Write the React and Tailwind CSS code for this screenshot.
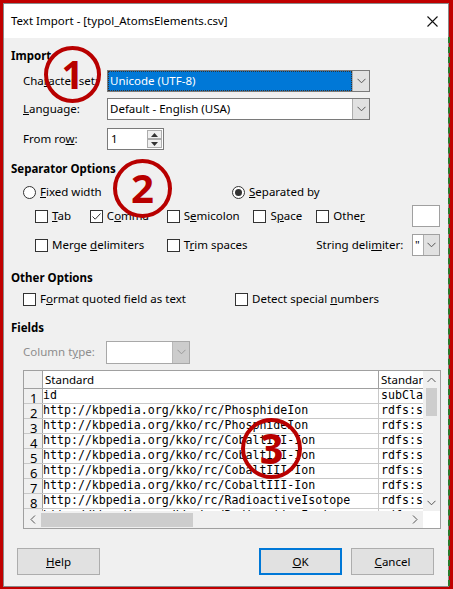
import React from "react";

const ui = { fontFamily: '"Noto Sans", "Liberation Sans", sans-serif' };
const mono = { fontFamily: '"DejaVu Sans Mono", "Liberation Mono", monospace' };

function ChevronDown({ color = "#555" }) {
  return (
    <svg width="9" height="6" viewBox="0 0 9 6">
      <path d="M0.5 0.8 L4.5 4.8 L8.5 0.8" fill="none" stroke={color} strokeWidth="1" />
    </svg>
  );
}

function Checkbox({ checked }) {
  return (
    <span className="inline-flex w-[13px] h-[13px] border border-[#333] bg-white items-center justify-center shrink-0">
      {checked && (
        <svg width="11" height="11" viewBox="0 0 11 11">
          <path d="M1.5 5.5 L4.2 8.2 L9.5 2.5" fill="none" stroke="#333" strokeWidth="1" />
        </svg>
      )}
    </span>
  );
}

function Radio({ checked }) {
  return (
    <span className="inline-flex w-[13px] h-[13px] rounded-full border border-[#333] bg-white items-center justify-center shrink-0">
      {checked && <span className="w-[7px] h-[7px] rounded-full bg-[#333]" />}
    </span>
  );
}

function Check({ checked, children, w }) {
  return (
    <div className="flex items-center gap-[4px]" style={w ? { width: w } : undefined}>
      <Checkbox checked={checked} />
      <span>{children}</span>
    </div>
  );
}

function Circle({ n, left, top, size }) {
  return (
    <div
      className="absolute rounded-full border-[4px] border-[#b80000] flex items-center justify-center"
      style={{ left, top, width: size, height: size }}
    >
      <span
        className="font-bold text-[#b80000] leading-none"
        style={{ ...ui, fontSize: size * 0.68 }}
      >
        {n}
      </span>
    </div>
  );
}

const rows = [
  ["id", "subCla:"],
  ["http://kbpedia.org/kko/rc/PhosphideIon", "rdfs:su"],
  ["http://kbpedia.org/kko/rc/PhosphideIon", "rdfs:su"],
  ["http://kbpedia.org/kko/rc/CobaltIII-Ion", "rdfs:su"],
  ["http://kbpedia.org/kko/rc/CobaltIII-Ion", "rdfs:su"],
  ["http://kbpedia.org/kko/rc/CobaltIII-Ion", "rdfs:su"],
  ["http://kbpedia.org/kko/rc/CobaltIII-Ion", "rdfs:su"],
  ["http://kbpedia.org/kko/rc/RadioactiveIsotope", "rdfs:su"],
  ["http://kbpedia.org/kko/rc/RadioactiveIsotope", "rdfs:su"],
];

export default function App() {
  return (
    <div className="relative w-[453px] h-[589px] bg-[#c00000] overflow-hidden" style={ui}>
      <div className="absolute left-[3px] top-[3px] w-[446px] h-[584px] border border-[#8a8a8a] bg-[#f0f0f0] flex flex-col text-[11.5px] text-black">
        {/* Title bar */}
        <div className="h-[34px] bg-white flex items-center justify-between pl-[7px] pr-[10px] shrink-0">
          <span className="text-[11.5px]">Text Import - [typol_AtomsElements.csv]</span>
          <svg width="11" height="11" viewBox="0 0 11 11">
            <path d="M0.5 0.5 L10.5 10.5 M10.5 0.5 L0.5 10.5" stroke="#111" strokeWidth="1.1" />
          </svg>
        </div>

        {/* Body */}
        <div className="flex flex-col pl-[7px] pr-[8px]">
          <div className="h-[16px] mt-[10px] leading-[16px] font-bold">Import</div>

          <div className="h-[22px] mt-[6px] flex items-center pl-[12px]">
            <span className="w-[84px]">Cha<u>r</u>acter set:</span>
            <div className="w-[263px] h-[22px] border border-[#7a7a7a] flex bg-white">
              <div className="flex-1 bg-[#0078d7] text-white pl-[2px] flex items-center outline-dotted outline-1 outline-[#333] -outline-offset-1">
                Unicode (UTF-8)
              </div>
              <div className="w-[17px] bg-[#e1e1e1] border-l border-[#adadad] flex items-center justify-center">
                <ChevronDown />
              </div>
            </div>
          </div>

          <div className="h-[22px] mt-[6px] flex items-center pl-[12px]">
            <span className="w-[84px]"><u>L</u>anguage:</span>
            <div className="w-[263px] h-[22px] border border-[#7a7a7a] flex bg-white">
              <div className="flex-1 pl-[2px] flex items-center">Default - English (USA)</div>
              <div className="w-[17px] bg-[#e1e1e1] border-l border-[#adadad] flex items-center justify-center">
                <ChevronDown />
              </div>
            </div>
          </div>

          <div className="h-[22px] mt-[8px] flex items-center pl-[12px]">
            <span className="w-[84px]">From ro<u>w</u>:</span>
            <div className="w-[57px] h-[22px] border border-[#7a7a7a] flex bg-white">
              <div className="flex-1 pl-[3px] flex items-center">1</div>
              <div className="w-[16px] flex flex-col py-[1px] pr-[1px]">
                <div className="flex-1 bg-[#f0f0f0] border border-[#adadad] flex items-center justify-center">
                  <svg width="7" height="4" viewBox="0 0 7 4"><path d="M0 4 L3.5 0 L7 4Z" fill="#333" /></svg>
                </div>
                <div className="flex-1 bg-[#f0f0f0] border border-[#adadad] flex items-center justify-center">
                  <svg width="7" height="4" viewBox="0 0 7 4"><path d="M0 0 L3.5 4 L7 0Z" fill="#333" /></svg>
                </div>
              </div>
            </div>
          </div>

          <div className="h-[16px] mt-[11px] leading-[16px] font-bold">Separator Options</div>

          <div className="h-[16px] mt-[7px] flex items-center pl-[12px]">
            <div className="flex items-center gap-[4px] w-[209px]">
              <Radio />
              <span><u>F</u>ixed width</span>
            </div>
            <div className="flex items-center gap-[4px]">
              <Radio checked />
              <span><u>S</u>eparated by</span>
            </div>
          </div>

          <div className="h-[22px] mt-[5px] flex items-center pl-[24px]">
            <Check w="55px"><u>T</u>ab</Check>
            <Check w="77px" checked>C<u>o</u>mma</Check>
            <Check w="87px">S<u>e</u>micolon</Check>
            <Check w="63px">S<u>p</u>ace</Check>
            <Check w="96px">Othe<u>r</u></Check>
            <div className="w-[28px] h-[22px] border border-[#a0a0a0] bg-white" />
          </div>

          <div className="h-[22px] mt-[7px] flex items-center pl-[24px]">
            <Check w="132px">Merge <u>d</u>elimiters</Check>
            <Check w="150px">T<u>r</u>im spaces</Check>
            <span className="w-[96px]">String deli<u>m</u>iter:</span>
            <div className="w-[28px] h-[22px] border border-[#a0a0a0] bg-white flex">
              <div className="flex-1 pl-[2px] flex items-center">"</div>
              <div className="w-[16px] bg-[#e1e1e1] border-l border-[#adadad] flex items-center justify-center">
                <ChevronDown />
              </div>
            </div>
          </div>

          <div className="h-[16px] mt-[14px] leading-[16px] font-bold">Other Options</div>

          <div className="h-[16px] mt-[5px] flex items-center pl-[12px]">
            <Check w="212px">F<u>o</u>rmat quoted field as text</Check>
            <Check>Detect special <u>n</u>umbers</Check>
          </div>

          <div className="h-[16px] mt-[13px] leading-[16px] font-bold">Fields</div>

          <div className="h-[22px] mt-[5px] flex items-center pl-[12px]">
            <span className="w-[83px] text-[#8d8d8d]">Column t<u>y</u>pe:</span>
            <div className="w-[84px] h-[23px] border border-[#a8a8a8] bg-white flex">
              <div className="flex-1" />
              <div className="w-[17px] bg-[#cccccc] border-l border-[#b8b8b8] flex items-center justify-center">
                <ChevronDown color="#999" />
              </div>
            </div>
          </div>

          {/* Table */}
          <div className="ml-[12px] mt-[7px] w-[418px] h-[159px] border border-[#a0a0a0] bg-white flex flex-col">
            <div className="flex flex-1 min-h-0">
              <div className="flex-1 min-w-0 overflow-hidden flex flex-col">
                <div className="flex h-[18px] shrink-0 border-b border-[#a0a0a0]">
                  <div className="w-[19px] shrink-0 bg-[#f0f0f0] border-r border-[#a0a0a0]" />
                  <div className="w-[336px] shrink-0 border-r border-[#a0a0a0] pl-[2px] leading-[18px]">Standard</div>
                  <div className="flex-1 pl-[2px] leading-[18px] overflow-hidden whitespace-nowrap">Standard</div>
                </div>
                {rows.map((r, i) => (
                  <div key={i} className="flex h-[15px] shrink-0 border-b border-[#c8c8c8]">
                    <div className="w-[19px] shrink-0 bg-[#f0f0f0] border-r border-[#a0a0a0] text-[13px] leading-[16px] pl-[6px] pt-[1px]">
                      {i + 1}
                    </div>
                    <div
                      className="w-[336px] shrink-0 border-r border-[#c8c8c8] text-[11.6px] leading-[13px] whitespace-nowrap overflow-hidden"
                      style={mono}
                    >
                      {r[0]}
                    </div>
                    <div
                      className="flex-1 pl-[2px] text-[11.6px] leading-[13px] whitespace-nowrap overflow-hidden"
                      style={mono}
                    >
                      {r[1]}
                    </div>
                  </div>
                ))}
              </div>
              {/* vertical scrollbar */}
              <div className="w-[17px] shrink-0 bg-[#f0f0f0] flex flex-col items-center">
                <div className="h-[17px] flex items-center justify-center">
                  <svg width="9" height="6" viewBox="0 0 9 6"><path d="M0.5 5 L4.5 1 L8.5 5" fill="none" stroke="#555" /></svg>
                </div>
                <div className="w-[11px] h-[28px] bg-[#cdcdcd]" />
                <div className="flex-1" />
                <div className="h-[17px] flex items-center justify-center">
                  <ChevronDown />
                </div>
              </div>
            </div>
            {/* horizontal scrollbar */}
            <div className="h-[17px] shrink-0 bg-[#f0f0f0] flex items-center">
              <div className="w-[17px] flex items-center justify-center">
                <svg width="6" height="9" viewBox="0 0 6 9"><path d="M5 0.5 L1 4.5 L5 8.5" fill="none" stroke="#555" /></svg>
              </div>
              <div className="w-[152px] h-[14px] bg-[#cdcdcd]" />
              <div className="flex-1" />
              <div className="w-[17px] flex items-center justify-center">
                <svg width="6" height="9" viewBox="0 0 6 9"><path d="M1 0.5 L5 4.5 L1 8.5" fill="none" stroke="#555" /></svg>
              </div>
              <div className="w-[17px] h-[17px] bg-white" />
            </div>
          </div>

          {/* Buttons */}
          <div className="mt-[19px] h-[27px] flex items-center pl-[6px]">
            <div className="w-[83px] h-[27px] bg-[#e1e1e1] border border-[#adadad] flex items-center justify-center">
              <span><u>H</u>elp</span>
            </div>
            <div className="flex-1" />
            <div className="w-[83px] h-[27px] bg-[#e1e1e1] border-2 border-[#0078d7] flex items-center justify-center">
              <span><u>O</u>K</span>
            </div>
            <div className="w-[83px] h-[27px] ml-[9px] mr-[6px] bg-[#e1e1e1] border border-[#adadad] flex items-center justify-center">
              <span><u>C</u>ancel</span>
            </div>
          </div>
        </div>
      </div>

      {/* right dashed strip */}
      <div className="absolute left-[448px] top-[37px] w-[2px] h-[549px] border-l-2 border-dashed border-[#2a7a2a]" />

      {/* annotation circles */}
      <Circle n="1" left={44} top={46} size={57} />
      <Circle n="2" left={113} top={159} size={59} />
      <Circle n="3" left={241} top={418} size={61} />
    </div>
  );
}
